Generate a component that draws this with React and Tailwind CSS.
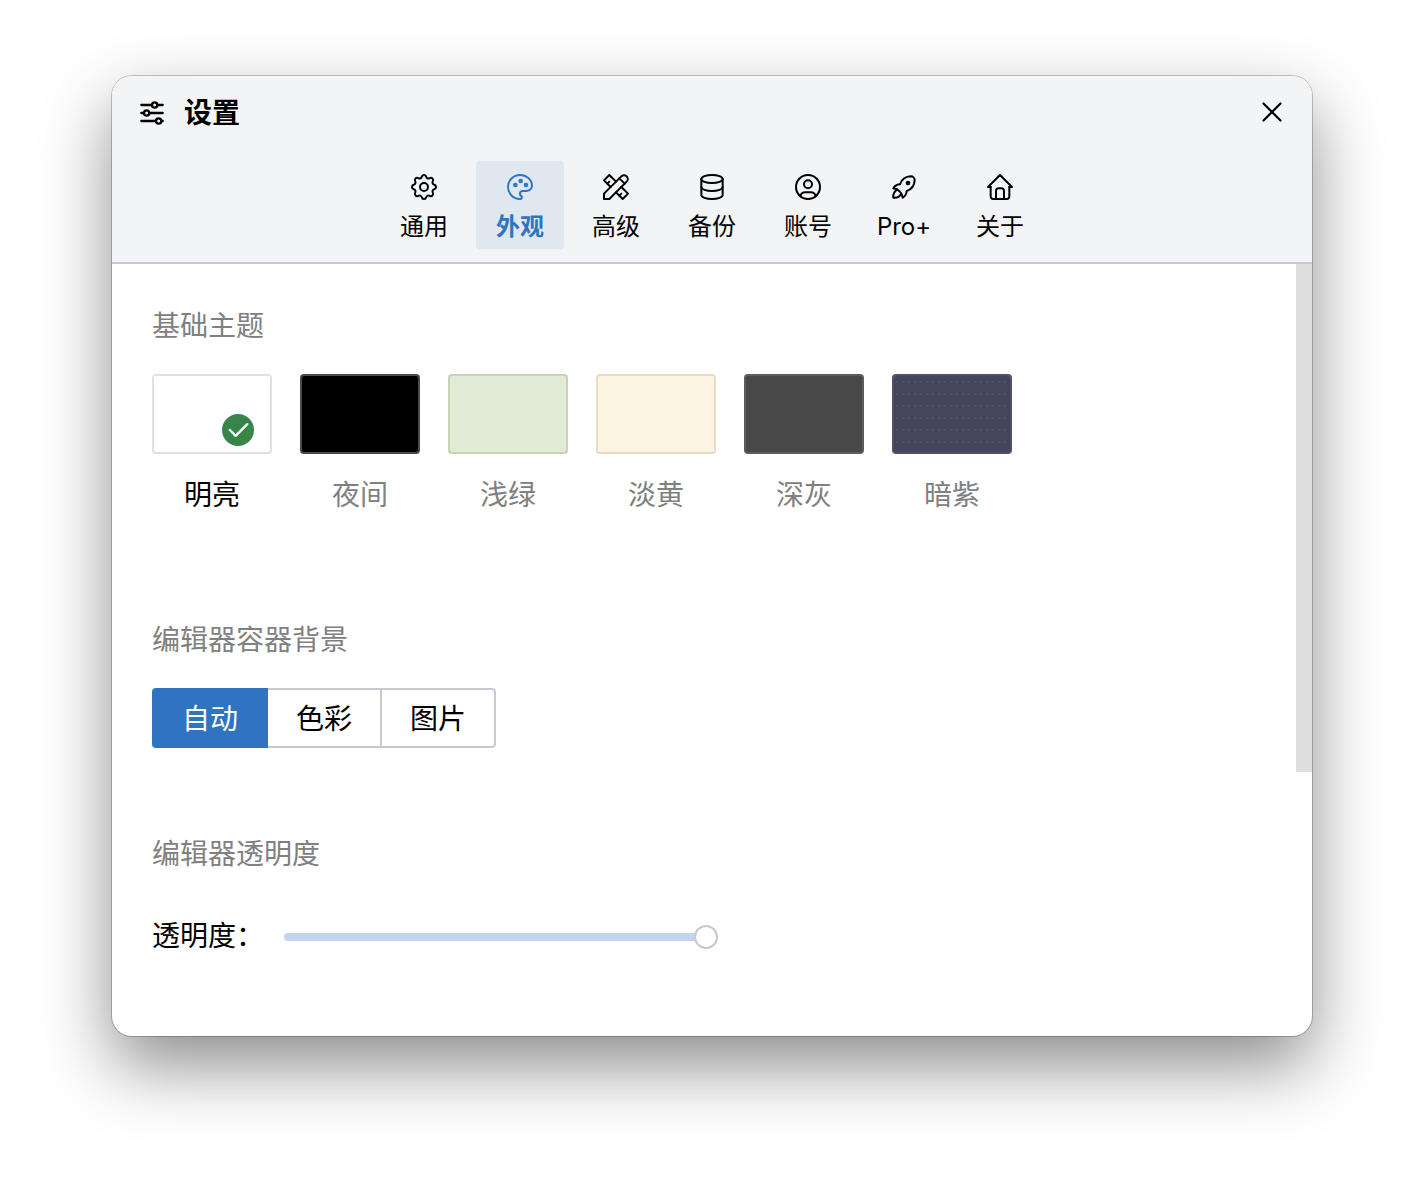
import { TbAdjustmentsHorizontal, TbDatabase, TbHome, TbPalette, TbRocket, TbSettings, TbTools, TbUserCircle, TbX, TbCheck } from 'react-icons/tb';

const tabs = [
  { label: '通用', icon: TbSettings },
  { label: '外观', icon: TbPalette, active: true },
  { label: '高级', icon: TbTools },
  { label: '备份', icon: TbDatabase },
  { label: '账号', icon: TbUserCircle },
  { label: 'Pro+', icon: TbRocket },
  { label: '关于', icon: TbHome }
];

const themes = [
  { label: '明亮', className: 'bg-white border-[#e0e0e0]', selected: true },
  { label: '夜间', className: 'bg-black border-[#4a4a4a]' },
  { label: '浅绿', className: 'bg-[#e1ebd5] border-[#c5d3b6]' },
  { label: '淡黄', className: 'bg-[#fdf4e1] border-[#e6dcc2]' },
  { label: '深灰', className: 'bg-[#484848] border-[#5c5c5c]' },
  {
    label: '暗紫',
    className:
      'bg-[#45465b] border-[#505168] bg-[radial-gradient(circle,#5a5b72_0.6px,transparent_0.8px)] bg-[size:6px_12px]'
  }
];

const sectionTitle = 'text-[28px] leading-10 text-[#808080]';

export default function App() {
  return (
    <div
      className="h-[1184px] bg-white px-[112px] pt-[76px]"
      style={{ fontFamily: 'Inter, "Noto Sans CJK SC", sans-serif' }}
    >
      <div className="flex h-[960px] w-[1200px] flex-col overflow-hidden rounded-[20px] bg-white shadow-[0_0_0_1px_rgba(0,0,0,0.22),0_30px_70px_0_rgba(0,0,0,0.45)]">
        <header className="h-[188px] shrink-0 border-b-2 border-[#c6c8d2] bg-[#f3f4f6]">
          <div className="flex h-[73px] items-center justify-between pl-6 pr-[23px]">
            <div className="flex items-center gap-4">
              <TbAdjustmentsHorizontal className="h-8 w-8 text-black" strokeWidth={1.75} />
              <h1 className="text-[28px] font-bold leading-10 text-black">设置</h1>
            </div>
            <TbX className="h-[34px] w-[34px] -translate-y-px text-black" strokeWidth={1.5} />
          </div>
          <nav className="mt-3 flex justify-center gap-2">
            {tabs.map(({ label, icon: Icon, active }) => (
              <div
                key={label}
                className={`flex h-[88px] w-[88px] flex-col items-center rounded pt-[10px] ${
                  active ? 'bg-[#dfe7f1] text-[#2f74c0]' : 'text-black'
                }`}
              >
                <Icon className="h-8 w-8" strokeWidth={1.5} />
                <span className={`mt-2 text-2xl leading-8 ${active ? 'font-bold' : ''}`}>{label}</span>
              </div>
            ))}
          </nav>
        </header>

        <div className="flex min-h-0 flex-1">
          <main className="flex-1 pl-10 pt-[42px]">
            <h2 className={sectionTitle}>基础主题</h2>
            <div className="mt-7 flex gap-7">
              {themes.map((theme) => (
                <div key={theme.label} className="w-[120px]">
                  <div className={`relative h-20 rounded border-2 ${theme.className}`}>
                    {theme.selected && (
                      <span className="absolute right-4 top-[38px] flex h-8 w-8 items-center justify-center rounded-full bg-[#38854a] text-white">
                        <TbCheck className="h-7 w-7" strokeWidth={2} />
                      </span>
                    )}
                  </div>
                  <p className={`mt-[21px] text-center text-[28px] leading-10 ${theme.selected ? 'text-black' : 'text-[#808080]'}`}>
                    {theme.label}
                  </p>
                </div>
              ))}
            </div>

            <h2 className={`mt-[105px] ${sectionTitle}`}>编辑器容器背景</h2>
            <div className="mt-7 flex h-[60px] w-[344px] overflow-hidden rounded text-[28px]">
              <div className="flex w-[116px] items-center justify-center bg-[#2f74c0] pt-[2px] text-white">自动</div>
              <div className="flex w-[114px] items-center justify-center border-y-2 border-r-2 border-[#c6c8d2] pt-[2px] text-black">色彩</div>
              <div className="flex w-[114px] items-center justify-center rounded-r border-y-2 border-r-2 border-[#c6c8d2] pt-[2px] text-black">图片</div>
            </div>

            <h2 className={`mt-[86px] ${sectionTitle}`}>编辑器透明度</h2>
            <div className="mt-[43px] flex h-10 items-center">
              <span className="w-[132px] -translate-y-px text-[28px] leading-10 text-black">透明度：</span>
              <div className="relative h-2 w-[424px] rounded-full bg-[#c3d5ee]">
                <span className="absolute -right-[10px] -top-2 h-6 w-6 rounded-full border-2 border-[#c6c8d2] bg-white" />
              </div>
            </div>
          </main>
          <div className="w-4 shrink-0">
            <div className="h-[508px] bg-[#dfdfdf]" />
          </div>
        </div>
      </div>
    </div>
  );
}
